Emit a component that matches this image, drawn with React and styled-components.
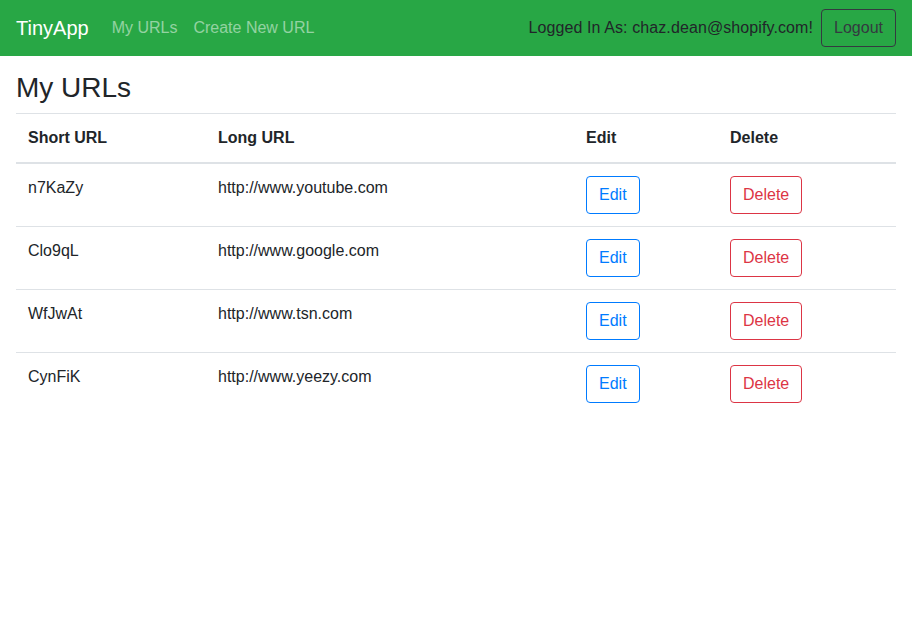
import React from "react";
import styled, { createGlobalStyle } from "styled-components";

const GlobalStyle = createGlobalStyle`
  * { box-sizing: border-box; }
  body {
    margin: 0;
    font-family: "Liberation Sans", "Helvetica Neue", Arial, sans-serif;
    font-size: 16px;
    line-height: 1.5;
    color: #212529;
    background: #fff;
  }
`;

const Navbar = styled.nav`
  display: flex;
  align-items: center;
  justify-content: space-between;
  height: 56px;
  padding: 8px 16px;
  background-color: #28a745;
`;

const NavLeft = styled.div`
  display: flex;
  align-items: center;
`;

const Brand = styled.a`
  font-size: 20px;
  line-height: 30px;
  color: #fff;
  margin-right: 15px;
  text-decoration: none;
`;

const NavLink = styled.a`
  color: rgba(255, 255, 255, 0.5);
  padding: 0 8px;
  text-decoration: none;
`;

const NavRight = styled.div`
  display: flex;
  align-items: center;
  gap: 8px;
`;

const UserText = styled.span`
  letter-spacing: 0.1px;
`;

const colors = {
  dark: "#343a40",
  primary: "#007bff",
  danger: "#dc3545",
};

const Button = styled.button`
  font-family: inherit;
  font-size: 16px;
  line-height: 24px;
  padding: 6px 12px;
  border-radius: 4px;
  background: transparent;
  cursor: pointer;
  color: ${({ variant }) => colors[variant]};
  border: 1px solid ${({ variant }) => colors[variant]};
`;

const Main = styled.main`
  padding: 15px 16px 0;
`;

const Title = styled.h3`
  margin: 0 0 8px;
  font-size: 28px;
  font-weight: 500;
  line-height: 1.2;
`;

const Table = styled.table`
  width: 100%;
  border-collapse: collapse;
`;

const Th = styled.th`
  text-align: left;
  padding: 12px;
  width: ${({ w }) => w}px;
  border-top: 1px solid #dee2e6;
  border-bottom: 2px solid #dee2e6;
  font-weight: 700;
  vertical-align: bottom;
`;

const Td = styled.td`
  padding: 12px;
  border-top: 1px solid #dee2e6;
  vertical-align: top;
`;

const urls = [
  { id: "n7KaZy", long: "http://www.youtube.com" },
  { id: "Clo9qL", long: "http://www.google.com" },
  { id: "WfJwAt", long: "http://www.tsn.com" },
  { id: "CynFiK", long: "http://www.yeezy.com" },
];

export default function App() {
  return (
    <>
      <GlobalStyle />
      <Navbar>
        <NavLeft>
          <Brand href="#">TinyApp</Brand>
          <NavLink href="#">My URLs</NavLink>
          <NavLink href="#">Create New URL</NavLink>
        </NavLeft>
        <NavRight>
          <UserText>Logged In As: chaz.dean@shopify.com!</UserText>
          <Button variant="dark">Logout</Button>
        </NavRight>
      </Navbar>
      <Main>
        <Title>My URLs</Title>
        <Table>
          <thead>
            <tr>
              <Th w={190}>Short URL</Th>
              <Th w={368}>Long URL</Th>
              <Th w={144}>Edit</Th>
              <Th w={178}>Delete</Th>
            </tr>
          </thead>
          <tbody>
            {urls.map((u) => (
              <tr key={u.id}>
                <Td>{u.id}</Td>
                <Td>{u.long}</Td>
                <Td>
                  <Button variant="primary">Edit</Button>
                </Td>
                <Td>
                  <Button variant="danger">Delete</Button>
                </Td>
              </tr>
            ))}
          </tbody>
        </Table>
      </Main>
    </>
  );
}
